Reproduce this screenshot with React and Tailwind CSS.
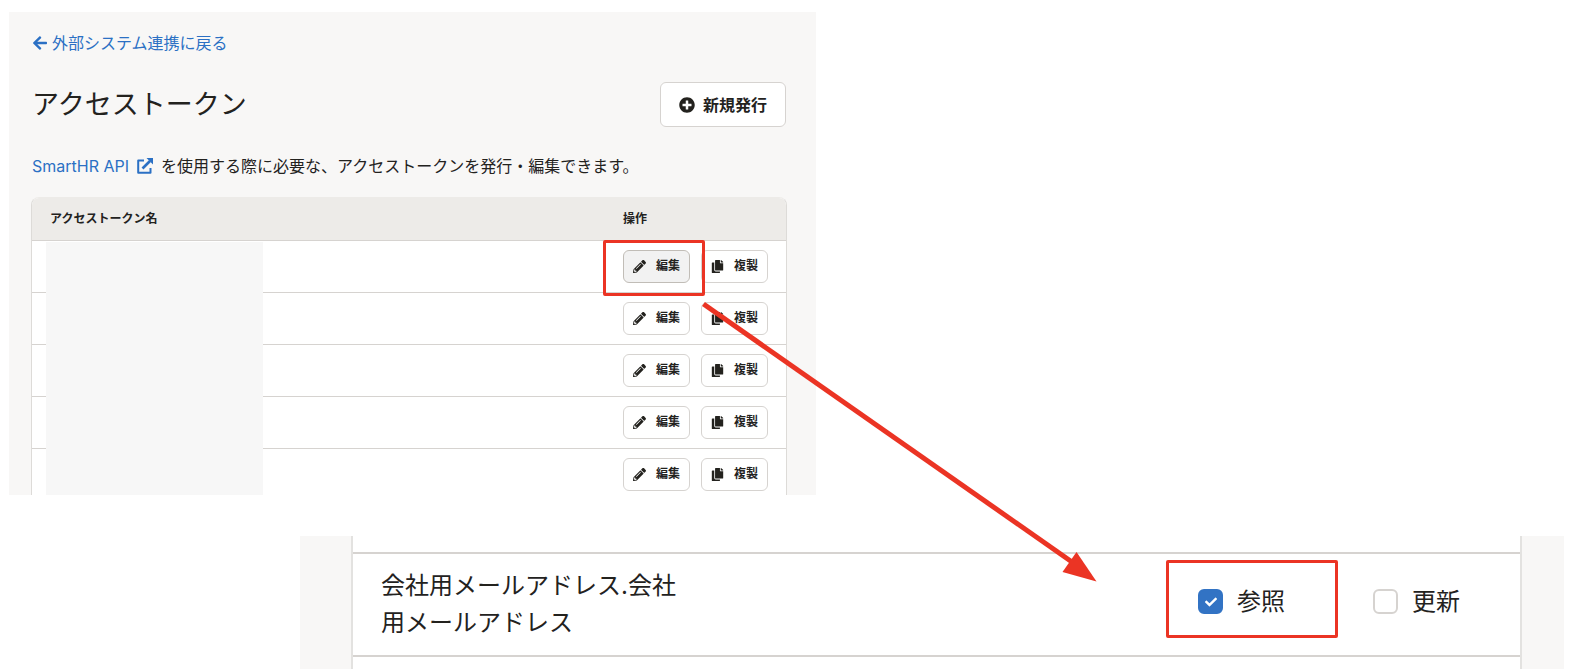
import { FaArrowLeft, FaCheck, FaCopy, FaPencilAlt, FaPlusCircle } from 'react-icons/fa';

const tokens = [
  { id: 1, active: true },
  { id: 2, active: false },
  { id: 3, active: false },
  { id: 4, active: false },
  { id: 5, active: false },
];

const permissions = [
  { id: 'read', label: '参照', checked: true, highlighted: true },
  { id: 'update', label: '更新', checked: false, highlighted: false },
];

function ExternalIcon() {
  return (
    <svg viewBox="0 0 16 16" className="size-4" fill="none" aria-hidden="true">
      <path d="M7 2.500H1.200V14.800H13.500V10" stroke="currentColor" strokeWidth="2" strokeLinejoin="round" />
      <path d="M5.500 10.500L13 3" stroke="currentColor" strokeWidth="2.600" />
      <path d="M9.500 0H16v6.500z" fill="currentColor" />
    </svg>
  );
}

function RowButton({ icon: Icon, active, children }) {
  return (
    <button
      type="button"
      className={`flex h-[33px] w-[67px] items-center justify-between rounded-md border px-[9px] text-xs font-bold ${
        active ? 'border-[#c1bdb7] bg-[#f2f2f2]' : 'border-[#d6d3d0] bg-white'
      }`}
    >
      <Icon className="size-[13px]" />
      {children}
    </button>
  );
}

function Permission({ id, label, checked, highlighted }) {
  return (
    <label htmlFor={id} className="relative flex items-center gap-[14px] text-2xl">
      <span className="relative flex size-[25px] items-center justify-center">
        <input
          id={id}
          type="checkbox"
          defaultChecked={checked}
          className="peer absolute inset-0 appearance-none rounded-md border-2 border-[#d6d3d0] bg-white checked:border-[#3273c4] checked:bg-[#3273c4]"
        />
        <FaCheck className="relative hidden size-3 text-white peer-checked:block" />
      </span>
      {label}
      {highlighted && (
        <span className="pointer-events-none absolute -left-8 -top-[26px] h-[78px] w-[172px] rounded-xs border-3 border-[#eb3424]" />
      )}
    </label>
  );
}

export default function App() {
  return (
    <main className="relative bg-white pt-3 pb-[3px] font-['Inter','Noto_Sans_CJK_JP',sans-serif] text-[#23221e]">
      {/* Token list */}
      <section className="ml-[9px] w-full max-w-[807px] bg-[#f8f7f6] pt-[19px] pr-[29px] pl-[22px]">
        <a href="#integrations" className="flex w-fit items-center gap-1 pl-px leading-6 text-[#2b70c4]">
          <FaArrowLeft className="size-4" />
          外部システム連携に戻る
        </a>

        <div className="mt-[27px] flex items-center justify-between px-px">
          <h1 className="text-[27px] leading-10">アクセストークン</h1>
          <button
            type="button"
            className="flex h-[45px] items-center gap-2 rounded-md border border-[#d6d3d0] bg-white px-[18px] font-bold"
          >
            <FaPlusCircle className="size-4" />
            新規発行
          </button>
        </div>

        <p className="mt-[27px] flex items-center gap-2 pl-px leading-6">
          <a href="#api" className="flex items-center gap-2 text-[#2b70c4]">
            SmartHR API
            <ExternalIcon />
          </a>
          を使用する際に必要な、アクセストークンを発行・編集できます。
        </p>

        <div className="relative mt-[19px] overflow-hidden rounded-t-lg border border-b-0 border-[#dddbd8] border-t-[#edebe8] bg-white">
          <table className="w-full text-left">
            <thead className="bg-[#edebe8] text-xs">
              <tr className="h-[42px]">
                <th className="pl-[18px]">アクセストークン名</th>
                <th className="w-[163px]">操作</th>
              </tr>
            </thead>
            <tbody>
              {tokens.map((token) => (
                <tr key={token.id} className="border-t border-[#d6d3d0]">
                  <td />
                  <td className={token.id === tokens.length ? 'pt-[9px] pb-1' : 'py-[9px]'}>
                    <div className="relative flex gap-[11px]">
                      <RowButton icon={FaPencilAlt} active={token.active}>編集</RowButton>
                      <RowButton icon={FaCopy}>複製</RowButton>
                      {token.active && (
                        <span className="pointer-events-none absolute -top-[10px] -left-5 h-14 w-[102px] rounded-xs border-3 border-[#eb3424]" />
                      )}
                    </div>
                  </td>
                </tr>
              ))}
            </tbody>
          </table>

          {/* Hidden token names */}
          <div className="absolute top-11 bottom-0 left-[14px] w-[217px] bg-[#f7f7f7]" />
        </div>
      </section>

      {/* Permission row */}
      <section className="mt-[41px] mr-4 ml-[300px] bg-[#f8f7f6] pr-[42px] pl-[51px]">
        <div className="border-x-2 border-[#e3e2e0] bg-white pt-4 pb-3">
          <div className="flex items-center justify-between border-y-2 border-[#d6d3d0] pt-[13px] pb-[14px] pr-[60px] pl-7">
            <p className="w-[300px] text-2xl leading-[37px]">会社用メールアドレス.会社用メールアドレス</p>
            <div className="flex gap-[88px] pb-1">
              {permissions.map((permission) => (
                <Permission key={permission.id} {...permission} />
              ))}
            </div>
          </div>
        </div>
      </section>

      {/* Arrow from the edit button to the permission */}
      <svg
        viewBox="0 0 400 284"
        className="pointer-events-none absolute top-[300px] left-[700px] h-[284px] w-[400px]"
        aria-hidden="true"
      >
        <path d="M3.500 4L372 262" stroke="#eb3424" strokeWidth="5" />
        <path d="M396.500 281.500L376.500 252L362.500 272z" fill="#eb3424" />
      </svg>
    </main>
  );
}
